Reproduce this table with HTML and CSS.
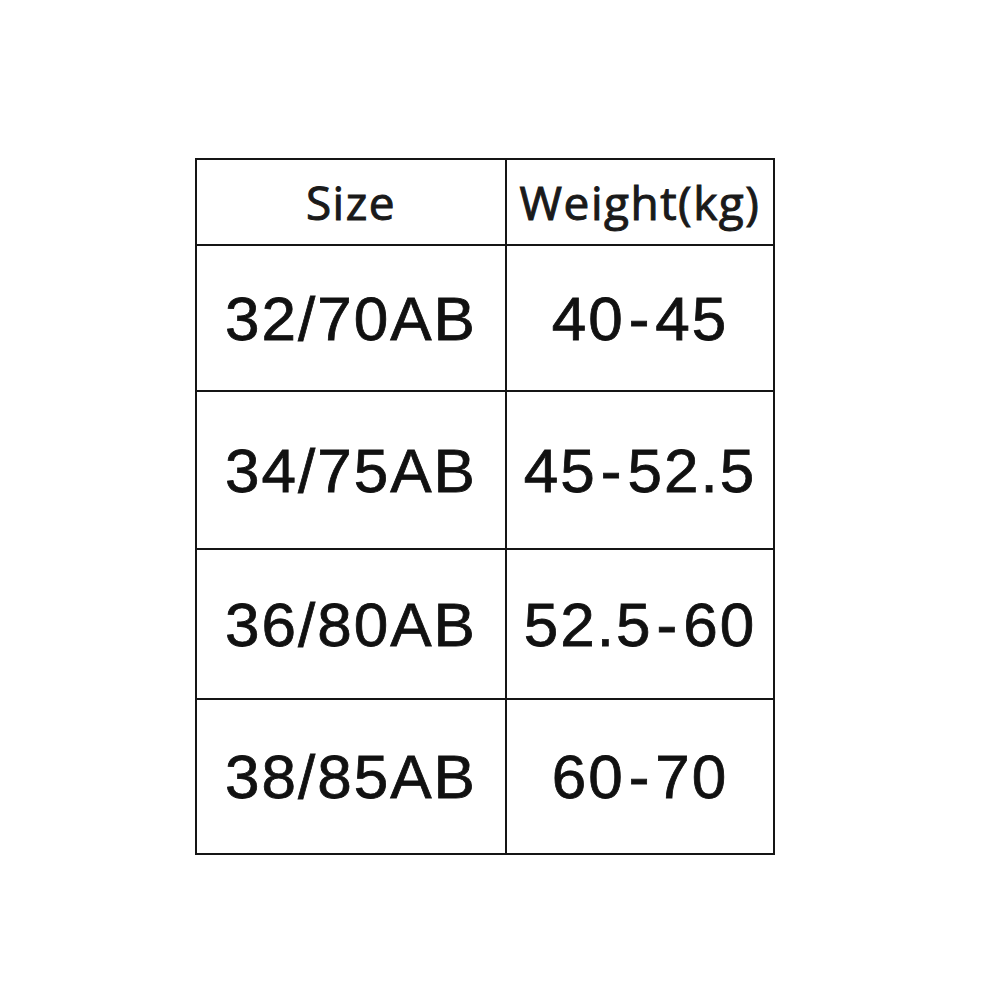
FILE: index.html
```html
<!DOCTYPE html>
<html>
<head>
<meta charset="utf-8">
<link rel="stylesheet" href="styles.css">
</head>
<body>
<div class="page">
  <table class="chart">
    <tr class="head"><th class="c1">Size</th><th class="c2">Weight(kg)</th></tr>
    <tr class="r1"><td>32/70AB</td><td>40<span class="dash">-</span>45</td></tr>
    <tr class="r2"><td>34/75AB</td><td>45<span class="dash">-</span>52.5</td></tr>
    <tr class="r3"><td>36/80AB</td><td>52.5<span class="dash">-</span>60</td></tr>
    <tr class="r4"><td>38/85AB</td><td>60<span class="dash">-</span>70</td></tr>
  </table>
</div>
</body>
</html>
```
FILE: styles.css
```css
html, body { margin: 0; padding: 0; background: #fff; }
.page {
  width: 1000px; height: 1000px;
  padding: 158px 0 0 195px;
  box-sizing: border-box;
}
.chart {
  border-collapse: collapse;
  width: 580px;
  color: #111;
}
.chart th, .chart td {
  border: 2px solid #151515;
  text-align: center;
  vertical-align: middle;
  padding: 0;
}
.chart th {
  font-family: "Open Sans", "Liberation Sans", sans-serif;
  font-weight: 500;
  font-size: 46px;
  height: 84px;
  color: #1a1a1a;
  letter-spacing: 1.5px;
  -webkit-text-stroke: 1px #1a1a1a;
}
.chart td {
  font-family: "Liberation Sans", Arial, sans-serif;
  font-size: 62px;
  letter-spacing: 2px;
  -webkit-text-stroke: 0.8px #111;
}
.dash { margin: 0 4px; }
.c1 { width: 308px; }
.r1 td { height: 144px; }
.r2 td { height: 156px; }
.r3 td { height: 148px; }
.r4 td { height: 153px; }
```
